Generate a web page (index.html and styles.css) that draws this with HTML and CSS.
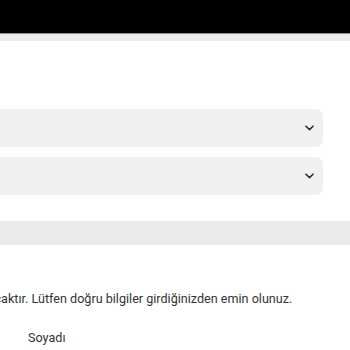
FILE: index.html
```html
<!DOCTYPE html>
<html lang="tr">
<head>
<meta charset="utf-8">
<title>Form</title>
<link rel="stylesheet" href="styles.css">
</head>
<body>
<header class="topbar"></header>
<div class="subbar"></div>
<main class="content">
  <div class="select">
    <span class="select-value"></span>
    <svg class="chevron" width="9" height="6" viewBox="0 0 9 6"><path d="M1 1.2 L4.5 4.6 L8 1.2" fill="none" stroke="#2e2e2e" stroke-width="1.6" stroke-linecap="round" stroke-linejoin="round"/></svg>
  </div>
  <div class="select">
    <span class="select-value"></span>
    <svg class="chevron" width="9" height="6" viewBox="0 0 9 6"><path d="M1 1.2 L4.5 4.6 L8 1.2" fill="none" stroke="#2e2e2e" stroke-width="1.6" stroke-linecap="round" stroke-linejoin="round"/></svg>
  </div>
  <div class="band"></div>
  <p class="note">Girdiğiniz bilgiler faturada kullanılacaktır. Lütfen doğru bilgiler girdiğinizden emin olunuz.</p>
  <div class="form-grid">
    <span class="label-cell"></span>
    <label class="label">Soyadı</label>
  </div>
</main>
</body>
</html>
```
FILE: styles.css
```css
html, body {
  margin: 0;
  padding: 0;
  background: #ffffff;
  overflow: hidden;
}
body {
  font-family: Roboto, "Liberation Sans", Arial, sans-serif;
  color: #333333;
  width: 350px;
  height: 350px;
}
.topbar {
  height: 33px;
  background: #000000;
  border-bottom: 1px solid #8e8e8e;
}
.subbar {
  height: 7px;
  background: #ececec;
}
.content {
  margin-left: -198px;
  width: 548px;
  padding-top: 68px;
}
.select {
  width: 521px;
  height: 38px;
  box-sizing: border-box;
  background: #f0f0f0;
  border-radius: 7px;
  display: flex;
  align-items: center;
  justify-content: space-between;
  padding: 0 9px 0 12px;
  margin-bottom: 10px;
}
.chevron {
  display: block;
  width: 9px;
  height: 6px;
}
.band {
  margin-top: 26px;
  height: 24px;
  background: #ebebec;
}
.note {
  margin: 44px 0 0;
  font-size: 12.6px;
  line-height: 20px;
  white-space: nowrap;
  color: #333333;
}
.form-grid {
  margin-top: 19px;
  display: grid;
  grid-template-columns: 210px 1fr;
  column-gap: 16px;
}
.label {
  font-size: 12.6px;
  line-height: 20px;
  color: #333333;
}
```
